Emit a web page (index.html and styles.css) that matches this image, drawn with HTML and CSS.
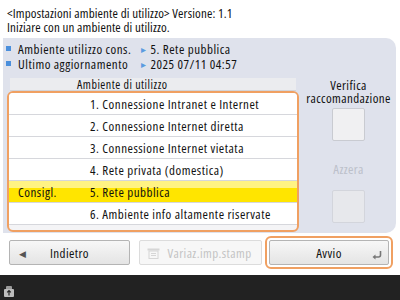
FILE: index.html
```html
<!DOCTYPE html>
<html lang="it">
<head>
    <meta charset="UTF-8">
    <title>Impostazioni ambiente di utilizzo</title>
    <link rel="stylesheet" href="styles.css">
</head>
<body>
    <div class="screen">
        <div class="header">
            <div>&lt;Impostazioni ambiente di utilizzo&gt; Versione: 1.1</div>
            <div>Iniziare con un ambiente di utilizzo.</div>
        </div>

        <div class="panel">
            <div class="info">
                <div class="info-row">
                    <span class="bullet"></span>
                    <span class="info-label">Ambiente utilizzo cons.</span>
                    <span class="tri">&#9656;</span>
                    <span>5. Rete pubblica</span>
                </div>
                <div class="info-row">
                    <span class="bullet"></span>
                    <span class="info-label">Ultimo aggiornamento</span>
                    <span class="tri">&#9656;</span>
                    <span>2025 07/11 04:57</span>
                </div>
            </div>

            <div class="main">
                <div class="list-wrap">
                    <div class="list-head">Ambiente di utilizzo</div>
                    <div class="list">
                        <div class="row"><span class="tag"></span><span>1. Connessione Intranet e Internet</span></div>
                        <div class="row"><span class="tag"></span><span>2. Connessione Internet diretta</span></div>
                        <div class="row"><span class="tag"></span><span>3. Connessione Internet vietata</span></div>
                        <div class="row"><span class="tag"></span><span>4. Rete privata (domestica)</span></div>
                        <div class="row selected"><span class="tag">Consigl.</span><span>5. Rete pubblica</span></div>
                        <div class="row"><span class="tag"></span><span>6. Ambiente info altamente riservate</span></div>
                    </div>
                </div>

                <div class="side">
                    <div class="side-label">Verifica<br>raccomandazione</div>
                    <div class="square"></div>
                    <div class="side-label disabled">Azzera</div>
                    <div class="square disabled"></div>
                </div>
            </div>
        </div>

        <div class="buttons">
            <div class="btn back">
                <span class="left-arrow">&#9664;</span>
                <span class="btn-text">Indietro</span>
            </div>
            <div class="btn disabled">
                <svg class="stamp" width="13" height="11" viewBox="0 0 13 11">
                    <rect x="0.5" y="0.5" width="12" height="2" fill="#d6d6d6"/>
                    <rect x="2" y="3" width="9" height="7.5" fill="none" stroke="#d6d6d6"/>
                    <line x1="4" y1="5.5" x2="9" y2="5.5" stroke="#d6d6d6"/>
                    <line x1="4" y1="7.5" x2="9" y2="7.5" stroke="#d6d6d6"/>
                </svg>
                <span class="btn-text">Variaz.imp.stamp</span>
            </div>
            <div class="focus">
                <div class="btn start">
                    <span class="btn-text">Avvio</span>
                    <svg class="corner" width="10" height="9" viewBox="0 0 10 9">
                        <path d="M8.5 0 V4 Q8.5 6 6.5 6 H3" fill="none" stroke="#777" stroke-width="1.6"/>
                        <path d="M0.5 6 L3.5 3.5 V8.5 Z" fill="#777"/>
                    </svg>
                </div>
            </div>
        </div>

        <div class="status">
            <svg width="10" height="11" viewBox="0 0 10 11">
                <rect x="2" y="0" width="6" height="4" rx="1" fill="#9a9a9a"/>
                <rect x="0" y="3" width="10" height="8" rx="1" fill="#bdbdbd"/>
                <path d="M5 4.5 V9.5 M3.2 6.3 L5 4.5 L6.8 6.3" fill="none" stroke="#222" stroke-width="1.2"/>
            </svg>
        </div>
    </div>
</body>
</html>
```

FILE: styles.css
```css
* {
    box-sizing: border-box;
}

body {
    margin: 0;
    background: #ffffff;
    font-family: "Open Sans", "Liberation Sans", sans-serif;
    font-stretch: 83%;
    font-size: 13px;
    color: #111;
}

.screen {
    width: 400px;
    height: 300px;
    display: flex;
    flex-direction: column;
    overflow: hidden;
}

/* Title */
.header {
    padding: 6px 7px 0;
    line-height: 14px;
    letter-spacing: 0.15px;
    white-space: nowrap;
}

.panel {
    margin: 4px 4px 0 3px;
    height: 195px;
    background: #dfe2ec;
    border-radius: 0 10px 10px 0;
    display: flex;
    flex-direction: column;
    letter-spacing: 0.5px;
}

.info {
    padding: 3px 0 0 3px;
}

.info-row {
    display: flex;
    align-items: center;
    height: 15px;
    white-space: nowrap;
}

.bullet {
    width: 5px;
    height: 5px;
    background: #4a8fdc;
    margin-right: 7px;
}

.info-label {
    flex: 0 0 123px;
}

.tri {
    color: #5a9be0;
    font-size: 10px;
    margin-right: 4px;
}

.main {
    display: flex;
    margin-top: 7px;
}

.list-wrap {
    width: 292px;
    margin-left: 4px;
}

.list-head {
    margin: 0 3px;
    height: 13px;
    padding-left: 67px;
    background: #ebecef;
    border-bottom: 1px solid #d2d4da;
    font-size: 12px;
    line-height: 13px;
    white-space: nowrap;
}

.list {
    height: 141px;
    border: 2px solid #f0a062;
    border-radius: 6px;
    background: #f4f4f6;
    overflow: hidden;
}

.row {
    display: flex;
    align-items: center;
    height: 22px;
    background: #ffffff;
    border-bottom: 1px solid #d6d7dc;
    white-space: nowrap;
}

.row.selected {
    background: linear-gradient(#fff383 0, #fff383 35%, #ffe500 35%);
}

.tag {
    flex: 0 0 81px;
    padding-left: 9px;
}

.side {
    flex: 1;
    display: flex;
    flex-direction: column;
    align-items: center;
    padding-left: 2px;
    letter-spacing: 0.4px;
}

.side-label {
    line-height: 13px;
    text-align: center;
    margin-top: 1px;
    white-space: nowrap;
}

.side-label.disabled {
    color: #bcc0ca;
    margin-top: 22px;
}

.square {
    width: 33px;
    height: 33px;
    margin-top: 3px;
    background: #f0f0f2;
    border: 1px solid #c9cbd1;
    border-radius: 2px;
}

.square.disabled {
    margin-top: 14px;
    background: #e7e8ec;
    border-color: #d3d5dc;
}

/* Bottom buttons */
.buttons {
    display: flex;
    align-items: center;
    padding: 3px 5px 0 9px;
    gap: 9px;
    letter-spacing: 0.4px;
}

.btn {
    position: relative;
    width: 121px;
    height: 25px;
    display: flex;
    align-items: center;
    justify-content: center;
    background: linear-gradient(#f7f7f7, #e4e4e4);
    border: 1px solid #b4b4b4;
    border-radius: 2px;
}

.btn.disabled {
    width: 123px;
    color: #c4c4c4;
    background: #f7f7f7;
    border-color: #dcdcdc;
}

.left-arrow {
    position: absolute;
    left: 9px;
    top: 6px;
    font-size: 9px;
    color: #555;
}

.stamp {
    position: absolute;
    left: 7px;
    top: 7px;
}

.btn.disabled .btn-text {
    margin-left: 18px;
}

.focus {
    padding: 2px;
    border: 2px solid #f0a062;
    border-radius: 6px;
    margin-left: -6px;
}

.btn.start {
    width: 120px;
}

.corner {
    position: absolute;
    right: 6px;
    bottom: 4px;
}

/* Status bar */
.status {
    margin-top: auto;
    height: 25px;
    background: #222222;
    padding: 8px 0 0 4px;
}
```
